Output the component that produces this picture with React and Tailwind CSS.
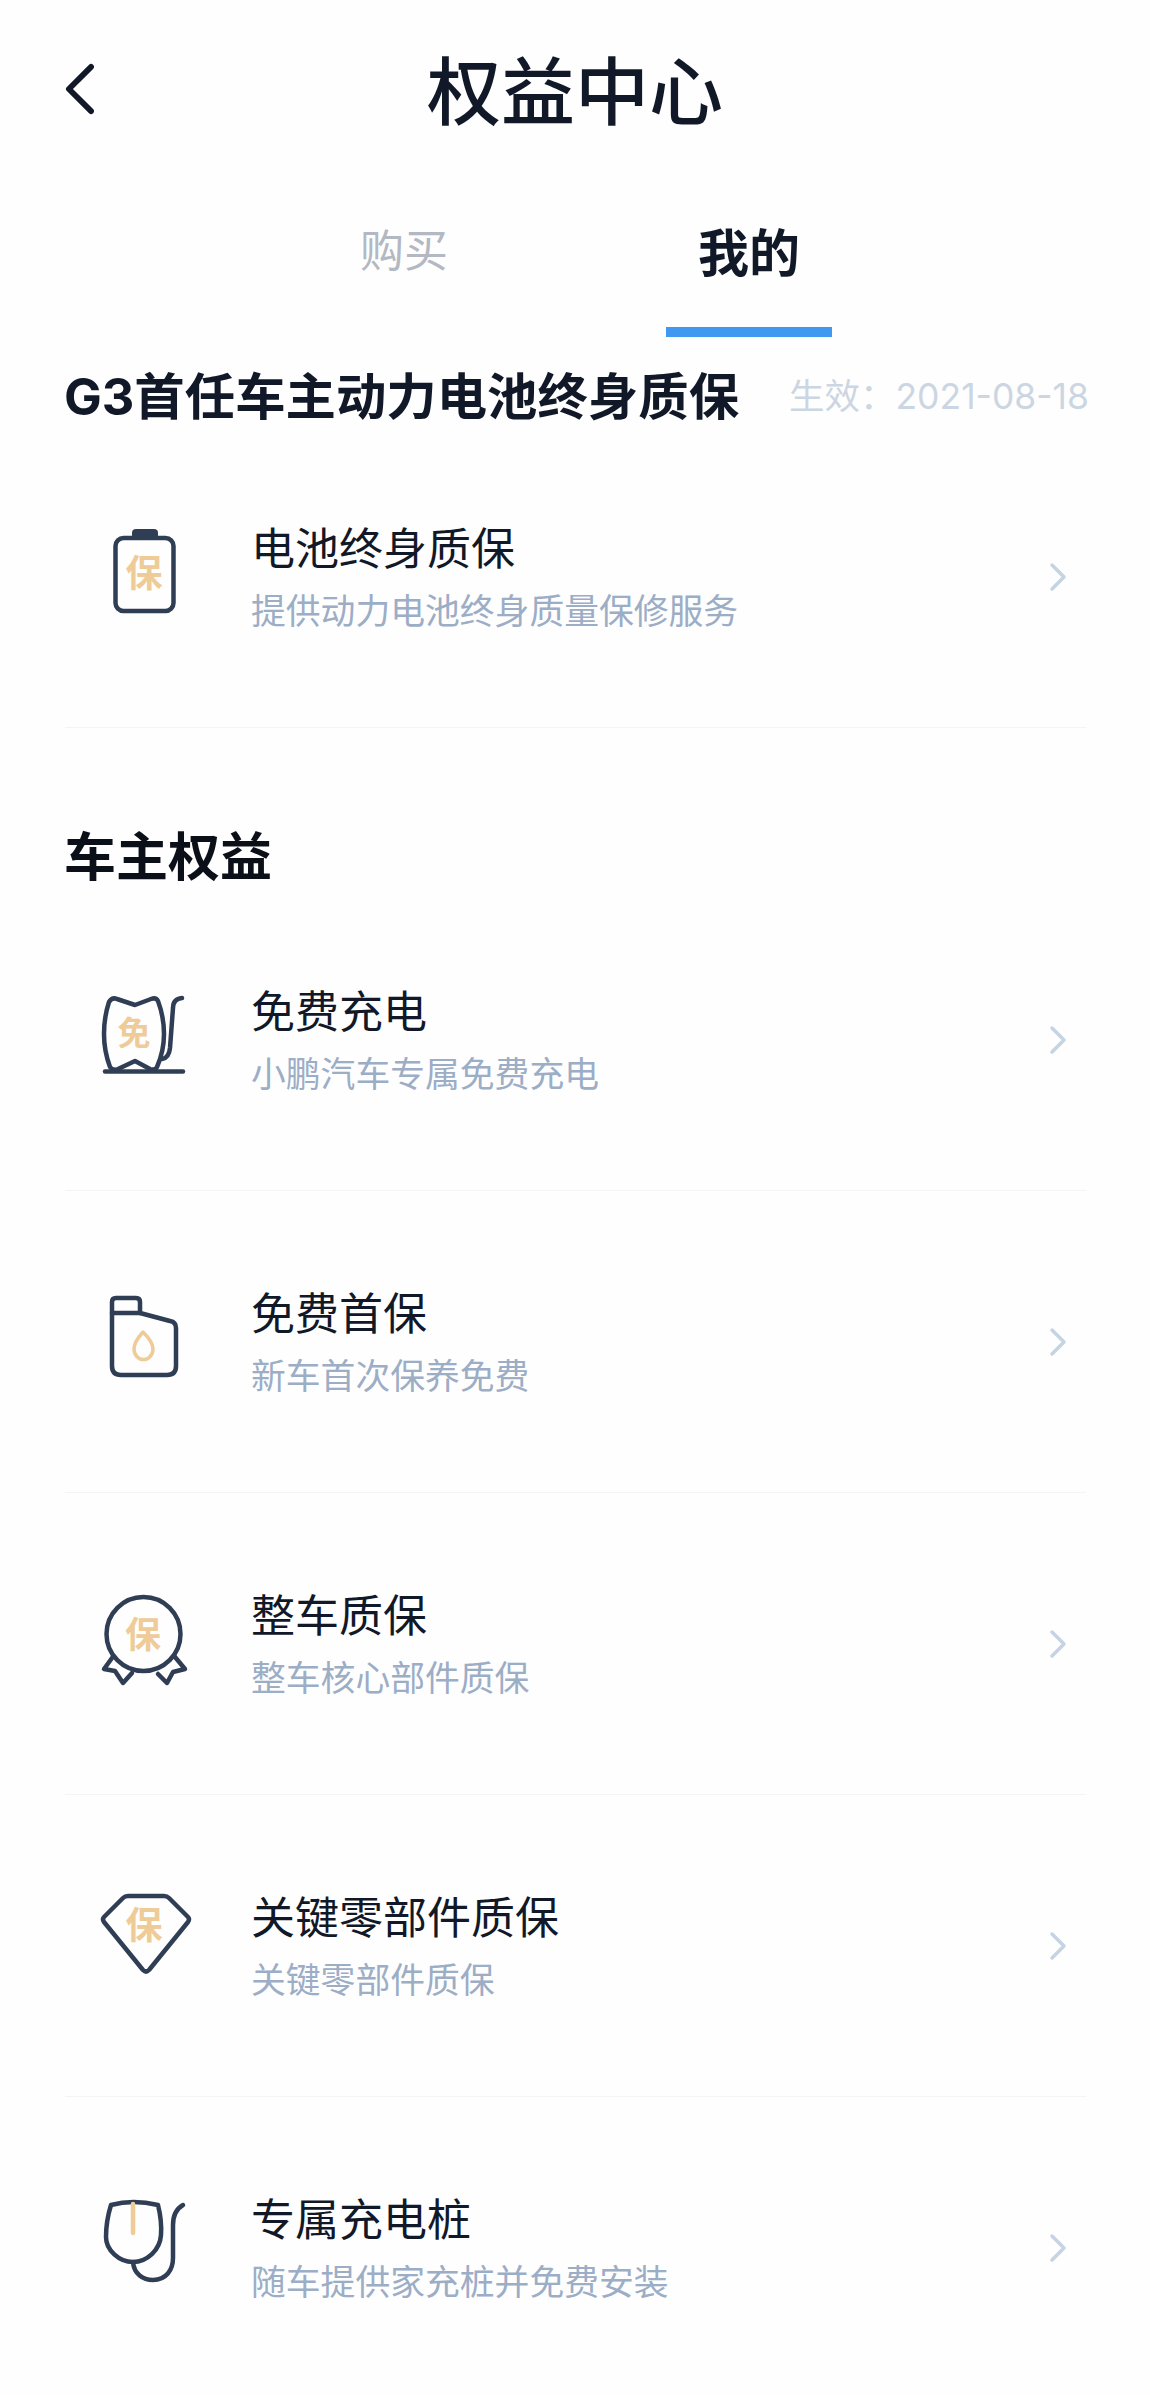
const FONT = "font-['Inter','Noto_Sans_CJK_SC',sans-serif]";
const INK = '#2f3e54';
const GOLD = '#eecb97';

const Badge = ({ x, y, size, children }) => (
  <text
    x={x}
    y={y}
    fontSize={size}
    fill={GOLD}
    stroke="none"
    fontWeight="700"
    textAnchor="middle"
    fontFamily="'Noto Sans CJK SC', sans-serif"
  >
    {children}
  </text>
);

const IconShell = ({ offset, children }) => (
  <svg
    viewBox={`0 ${offset} 140 120`}
    className="h-[120px] w-[140px] shrink-0"
    fill="none"
    stroke={INK}
    strokeWidth="4.5"
    strokeLinecap="round"
    strokeLinejoin="round"
  >
    {children}
  </svg>
);

const BatteryIcon = () => (
  <IconShell offset={16}>
    <rect x="35.5" y="37" width="58" height="73" rx="8" />
    <path d="M52 36v-4q0-4 4-4h18q4 0 4 4v4z" fill={INK} stroke="none" />
    <Badge x="64" y="86" size="37">保</Badge>
  </IconShell>
);

const BagIcon = () => (
  <IconShell offset={9}>
    <path d="M29 31q3-5 8-3l18 6 16-6q5-2 7 2 6 16 6 33t-7 33q-2 4-7 2l-15-8-17 8q-5 2-8-2-6-16-6-33t5-32z" />
    <path d="M102 27q-9 1-9 10l-3 40q-1 10-8 11" />
    <path d="M25 100.5h78" />
    <Badge x="54" y="74" size="33">免</Badge>
  </IconShell>
);

const OilIcon = () => (
  <IconShell offset={11}>
    <path d="M32 42V31q0-4 4-4h20q4 0 4 4v11z" />
    <path d="M32 42v53q0 9 9 9h46q9 0 9-9V57q0-6-6-7L60 42" />
    <path d="M63 61q-9 10-9 17a9 10 0 0 0 19 0q0-7-10-17z" stroke={GOLD} strokeWidth="3.5" />
  </IconShell>
);

const MedalIcon = () => (
  <IconShell offset={13}>
    <circle cx="63.5" cy="63" r="37" />
    <path d="M32 87l-8 11 11 2 8 12 9-10" />
    <path d="M95 86l10 12-12 3-6 11-9-9" />
    <Badge x="63" y="77" size="36">保</Badge>
  </IconShell>
);

const DiamondIcon = () => (
  <IconShell offset={10}>
    <path d="M48 20h36q3 0 5 2l19 19q2 2 0 5L69 94q-3 3-6 0L24 46q-2-3 0-5l19-19q2-2 5-2z" />
    <Badge x="64" y="63" size="37">保</Badge>
  </IconShell>
);

const PlugIcon = () => (
  <IconShell offset={8}>
    <path d="M31 25q22-6 47 0 4 16 3 30c-1 15-14 27-28 27S26 70 26 57q0-16 5-32z" />
    <path d="M53 82c1 12 10 18 20 18 13 0 20-10 20-22V45c0-10 3-16 10-20" />
    <path d="M53 24v29" stroke={GOLD} />
  </IconShell>
);

const Row = ({ icon, title, sub }) => (
  <div className="flex h-[302px] items-center border-b border-[#f3f4f6] pl-[15px] pr-[19px]">
    {icon}
    <div className="ml-[31px] flex flex-1 flex-col">
      <div className="text-[44px] leading-[60px] text-[#111827]">{title}</div>
      <div className="mt-[8px] text-[34.8px] leading-[48px] text-[#9cadc6]">{sub}</div>
    </div>
    <svg viewBox="0 0 18 30" className="h-[30px] w-[18px]" fill="none" stroke="#c5d3e3" strokeWidth="3.5" strokeLinecap="round" strokeLinejoin="round">
      <path d="M3 3l12 12L3 27" />
    </svg>
  </div>
);

const App = () => (
  <div className={`h-[2395px] overflow-hidden bg-[#fefefe] ${FONT}`}>
    <div className="grid h-[184px] grid-cols-[1fr_auto_1fr] items-center px-[65px]">
      <svg viewBox="0 0 30 54" className="mb-[6px] h-[52px] w-[29px]" fill="none" stroke="#111827" strokeWidth="6" strokeLinecap="round" strokeLinejoin="round">
        <path d="M27 4L4 27l23 23" />
      </svg>
      <div className="text-[74px] font-medium leading-none text-[#111827]">权益中心</div>
      <div />
    </div>

    <div className="flex h-[153px] justify-center pl-[3px]">
      <div className="flex w-[345px] flex-col items-center">
        <div className="mt-[37px] text-[44px] leading-[60px] text-[#b3b8c2]">购买</div>
      </div>
      <div className="flex w-[345px] flex-col items-center">
        <div className="mt-[40px] text-[51px] font-bold leading-[60px] text-[#111827]">我的</div>
        <div className="mt-auto h-[10px] w-[166px] bg-[#4098f0]" />
      </div>
    </div>

    <div className="ml-[64px] mr-[61px]">
      <div className="mt-[33px] flex h-[56px] items-center justify-between pb-[2px]">
        <div className="text-[50.4px] font-bold leading-none text-[#111827]">G3首任车主动力电池终身质保</div>
        <div className="text-[35.5px] leading-none text-[#ccd6e2]">生效：2021-08-18</div>
      </div>
      <div className="ml-[1px] mr-[3px]">
        <Row icon={<BatteryIcon />} title="电池终身质保" sub="提供动力电池终身质量保修服务" />

        <div className="-ml-[1px] mt-[105px] flex h-[56px] items-center pb-[6px] text-[52px] font-bold leading-none text-[#0b0f17]">车主权益</div>
        <Row icon={<BagIcon />} title="免费充电" sub="小鹏汽车专属免费充电" />
        <Row icon={<OilIcon />} title="免费首保" sub="新车首次保养免费" />
        <Row icon={<MedalIcon />} title="整车质保" sub="整车核心部件质保" />
        <Row icon={<DiamondIcon />} title="关键零部件质保" sub="关键零部件质保" />
        <Row icon={<PlugIcon />} title="专属充电桩" sub="随车提供家充桩并免费安装" />
      </div>
    </div>
  </div>
);

export default App;
